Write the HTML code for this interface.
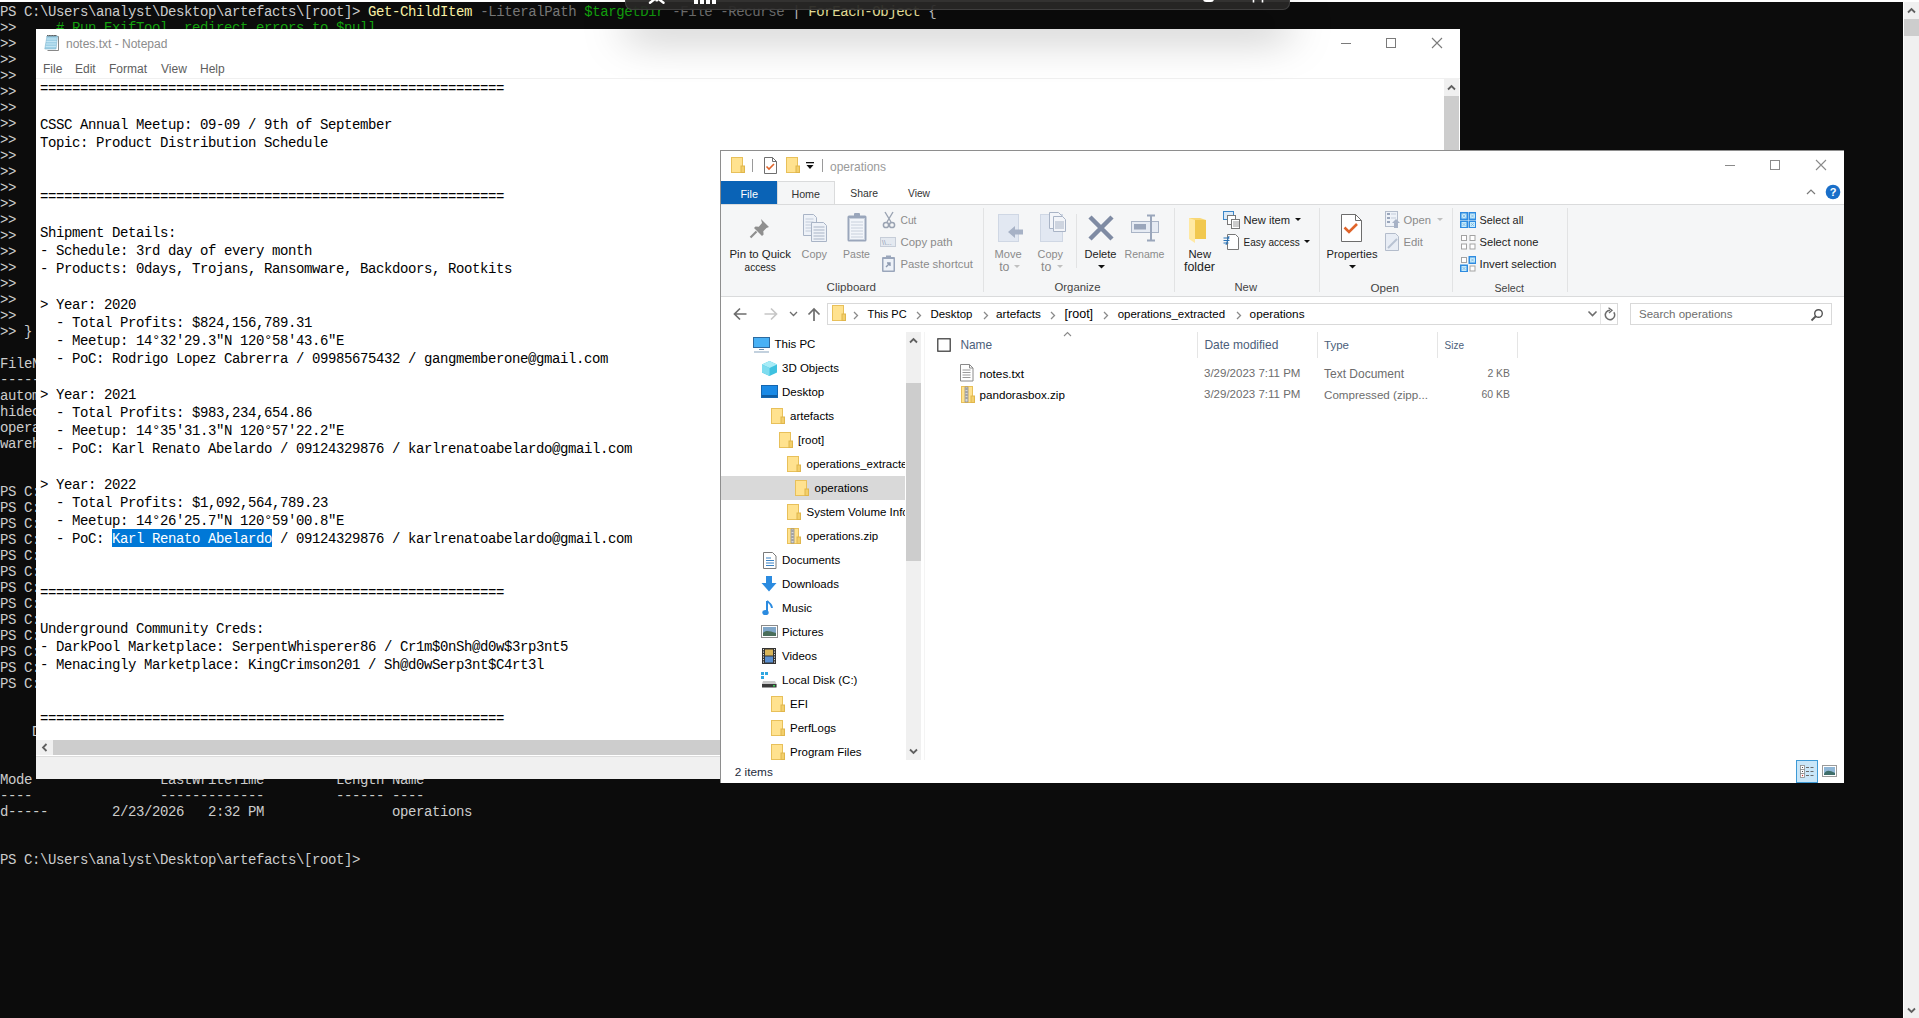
<!DOCTYPE html>
<html><head><meta charset="utf-8"><style>
*{margin:0;padding:0;box-sizing:border-box}
html,body{width:1919px;height:1018px;overflow:hidden;background:#fff;position:relative}
.a{position:absolute;display:block}
.t{position:absolute;white-space:nowrap;line-height:1;font-family:"Liberation Sans",sans-serif}
#term{position:absolute;left:0;top:2px;width:1903px;height:1016px;background:#0c0c0c;overflow:hidden}
#term pre{position:absolute;left:0;top:1.5px;font-family:"Liberation Mono",monospace;font-size:14px;letter-spacing:-0.4px;line-height:16px;color:#cccccc;white-space:pre}
.y{color:#f9f1a5}.g{color:#767676}.gr{color:#13a10e}
#tsb{position:absolute;left:1904px;top:2px;width:15px;height:1016px;background:#f0f0f0}
.sans{font-family:"Liberation Sans",sans-serif}
#np{position:absolute;left:36px;top:29px;width:1424px;height:750px;background:#fff;overflow:hidden}
#np .title{position:absolute;left:30px;top:8px;font-size:12px;color:#8c8c8c}
#np .menu{position:absolute;left:0;top:31px;height:18px;width:100%;font-size:12px;color:#5e5e5e}
#np .menu span{position:absolute;top:2px}
#np .mline{position:absolute;left:0;top:49px;width:1424px;height:1px;background:#f0f0f0}
#np pre{position:absolute;left:4px;top:50.5px;font-family:"Liberation Mono",monospace;font-size:14px;letter-spacing:-0.4px;line-height:18px;color:#000;white-space:pre}
.sel{background:#0078d7;color:#fff;padding:1.7px 0 0 0}
</style></head><body>
<div id="term"><pre>PS C:\Users\analyst\Desktop\artefacts\[root]&gt; <span class="y">Get-ChildItem</span> <span class="g">-LiteralPath</span> <span class="gr">$targetDir</span> <span class="g">-File</span> <span class="g">-Recurse</span> | <span class="y">ForEach-Object</span> {
&gt;&gt;     <span class="gr"># Run ExifTool, redirect errors to $null</span>
&gt;&gt;
&gt;&gt;
&gt;&gt;
&gt;&gt;
&gt;&gt;
&gt;&gt;
&gt;&gt;
&gt;&gt;
&gt;&gt;
&gt;&gt;
&gt;&gt;
&gt;&gt;
&gt;&gt;
&gt;&gt;
&gt;&gt;
&gt;&gt;
&gt;&gt;
&gt;&gt;
&gt;&gt; }

FileName
--------
automation_log.txt
hidecontacts.txt
operations.zip
warehouse.txt


PS C:\Users\analyst\Desktop\artefacts\[root]&gt;
PS C:\Users\analyst\Desktop\artefacts\[root]&gt;
PS C:\Users\analyst\Desktop\artefacts\[root]&gt;
PS C:\Users\analyst\Desktop\artefacts\[root]&gt;
PS C:\Users\analyst\Desktop\artefacts\[root]&gt;
PS C:\Users\analyst\Desktop\artefacts\[root]&gt;
PS C:\Users\analyst\Desktop\artefacts\[root]&gt;
PS C:\Users\analyst\Desktop\artefacts\[root]&gt;
PS C:\Users\analyst\Desktop\artefacts\[root]&gt;
PS C:\Users\analyst\Desktop\artefacts\[root]&gt;
PS C:\Users\analyst\Desktop\artefacts\[root]&gt;
PS C:\Users\analyst\Desktop\artefacts\[root]&gt;
PS C:\Users\analyst\Desktop\artefacts\[root]&gt;


    Directory: C:\Users\analyst\Desktop\artefacts\[root]


Mode                LastWriteTime         Length Name
----                -------------         ------ ----
d-----        2/23/2026   2:32 PM                operations


PS C:\Users\analyst\Desktop\artefacts\[root]&gt;
</pre></div>
<div id="tsb"></div>

<div id="np" class="sans">
<svg class="a" style="left:8px;top:5px" width="17" height="17" viewBox="0 0 17 17"><path d="M4.5 2.5h10v14h-11" fill="none" stroke="#7a7a7a" stroke-width="0.9"/><path d="M3 2h10.5l-1.5 13H0.8z" fill="#9fd0e6" stroke="#7fb6cf" stroke-width="0.6"/><path d="M2.6 5h10.2M2.3 7.5h10.2M2 10h10.2M1.7 12.5h10.2" stroke="#c6e8f5" stroke-width="0.9"/><path d="M3 2.2l0.8-1 0.8 1 0.8-1 0.8 1 0.8-1 0.8 1 0.8-1 0.8 1 0.8-1 0.8 1 0.8-1 0.8 1" fill="none" stroke="#333" stroke-width="0.8"/></svg>
<div class="a" style="left:1408px;top:50px;width:15px;height:661px;background:#f0f0f0"></div>
<div class="a" style="left:1408px;top:67px;width:15px;height:200px;background:#cdcdcd"></div>
<svg class="a" style="left:1411px;top:55px" width="9" height="7" viewBox="0 0 9 7"><path d="M1 5.5L4.5 2 8 5.5" fill="none" stroke="#606060" stroke-width="1.8"/></svg>
<div class="a" style="left:0;top:711px;width:1408px;height:15px;background:#f0f0f0"></div>
<div class="a" style="left:17px;top:711px;width:1100px;height:15px;background:#cdcdcd"></div>
<svg class="a" style="left:5px;top:714px" width="7" height="9" viewBox="0 0 7 9"><path d="M5.5 1L2 4.5 5.5 8" fill="none" stroke="#606060" stroke-width="1.8"/></svg>
<div class="a" style="left:0;top:726px;width:1424px;height:1px;background:#fff"></div>
<div class="a" style="left:0;top:727px;width:1424px;height:1px;background:#dcdcdc"></div>
<div class="a" style="left:0;top:728px;width:1424px;height:22px;background:#f0f0f0"></div>
<div class="a" style="left:1305px;top:14px;width:10px;height:1px;background:#7a7a7a"></div>
<div class="a" style="left:1350px;top:9px;width:10px;height:10px;border:1px solid #7a7a7a"></div>
<svg class="a" style="left:1395px;top:8px" width="12" height="12" viewBox="0 0 12 12"><path d="M1 1L11 11M11 1L1 11" stroke="#7a7a7a" stroke-width="1.1"/></svg>
<div class="title">notes.txt - Notepad</div>
<div class="menu"><span style="left:7px">File</span><span style="left:39px">Edit</span><span style="left:73px">Format</span><span style="left:125px">View</span><span style="left:164px">Help</span></div>
<div class="mline"></div>
<pre>==========================================================

CSSC Annual Meetup: 09-09 / 9th of September
Topic: Product Distribution Schedule


==========================================================

Shipment Details:
- Schedule: 3rd day of every month
- Products: 0days, Trojans, Ransomware, Backdoors, Rootkits

&gt; Year: 2020
  - Total Profits: $824,156,789.31
  - Meetup: 14°32'29.3"N 120°58'43.6"E
  - PoC: Rodrigo Lopez Cabrerra / 09985675432 / gangmemberone@gmail.com

&gt; Year: 2021
  - Total Profits: $983,234,654.86
  - Meetup: 14°35'31.3"N 120°57'22.2"E
  - PoC: Karl Renato Abelardo / 09124329876 / karlrenatoabelardo@gmail.com

&gt; Year: 2022
  - Total Profits: $1,092,564,789.23
  - Meetup: 14°26'25.7"N 120°59'00.8"E
  - PoC: <span class="sel">Karl Renato Abelardo</span> / 09124329876 / karlrenatoabelardo@gmail.com


==========================================================

Underground Community Creds:
- DarkPool Marketplace: SerpentWhisperer86 / Cr1m$0nSh@d0w$3rp3nt5
- Menacingly Marketplace: KingCrimson201 / Sh@d0wSerp3nt$C4rt3l


==========================================================
</pre>
</div>


<div class="a" style="left:720px;top:150px;width:1124px;height:633px;background:#fff;border:1px solid #8e8e8e;border-right:0;border-bottom:0"></div><div class="a" style="left:752px;top:159px;width:1px;height:13px;background:#9a9a9a"></div><div class="a" style="left:822px;top:159px;width:1px;height:13px;background:#9a9a9a"></div><div class="a" style="left:1725px;top:165px;width:10px;height:1px;background:#8a8a8a"></div><div class="a" style="left:1770px;top:160px;width:10px;height:10px;border:1px solid #8a8a8a"></div><div class="a" style="left:721px;top:181px;width:56px;height:23px;background:#0a63b6"></div><div class="a" style="left:777px;top:181px;width:58px;height:24px;background:#f5f6f7;border:1px solid #dadbdc;border-bottom:0"></div><div class="a" style="left:721px;top:204px;width:1123px;height:93px;background:#f5f6f7;border-top:1px solid #dadbdc;border-bottom:1px solid #dadbdc"></div><div class="a" style="left:983px;top:208px;width:1px;height:84px;background:#e2e3e4"></div><div class="a" style="left:1174px;top:208px;width:1px;height:84px;background:#e2e3e4"></div><div class="a" style="left:1319px;top:208px;width:1px;height:84px;background:#e2e3e4"></div><div class="a" style="left:1452px;top:208px;width:1px;height:84px;background:#e2e3e4"></div><div class="a" style="left:1567px;top:208px;width:1px;height:84px;background:#e2e3e4"></div><div class="a" style="left:1076px;top:214px;width:1px;height:54px;background:#e2e3e4"></div><div class="a" style="left:827px;top:303px;width:791px;height:22px;border:1px solid #d9d9d9;background:#fff"></div><div class="a" style="left:1600px;top:304px;width:1px;height:20px;background:#e5e5e5"></div><div class="a" style="left:1630px;top:303px;width:202px;height:22px;border:1px solid #d9d9d9;background:#fff"></div><div class="a" style="left:721px;top:476px;width:184px;height:24px;background:#d9d9d9"></div><div class="a" style="left:906px;top:332px;width:15px;height:428px;background:#f0f0f0"></div><div class="a" style="left:906px;top:383px;width:15px;height:178px;background:#cdcdcd"></div><div class="a" style="left:924px;top:332px;width:1px;height:428px;background:#f4f4f4"></div><div class="a" style="left:1197px;top:332px;width:1px;height:26px;background:#e5e5e5"></div><div class="a" style="left:1317px;top:332px;width:1px;height:26px;background:#e5e5e5"></div><div class="a" style="left:1437px;top:332px;width:1px;height:26px;background:#e5e5e5"></div><div class="a" style="left:1517px;top:332px;width:1px;height:26px;background:#e5e5e5"></div><div class="a" style="left:1796px;top:760px;width:22px;height:23px;background:#c9e6f8;border:1px solid #3e9ad6"></div>
<svg class="a" style="left:731px;top:157px;" width="14" height="16" viewBox="0 0 14 16"><rect x="0.5" y="0.5" width="11" height="15" fill="#ffe28f" stroke="#e8c05a"/><rect x="10" y="9" width="3.5" height="6.5" fill="#f3cf6b" stroke="#e0b64c"/></svg><svg class="a" style="left:764px;top:157px;" width="13" height="17" viewBox="0 0 13 17"><path d="M0.5 0.5h8l4 4v12h-12z" fill="#fff" stroke="#6f6f6f"/><path d="M8.5 0.5v4h4" fill="none" stroke="#6f6f6f"/><path d="M2.5 9.5l2.5 2.5 5-5" fill="none" stroke="#e0642a" stroke-width="1.6"/></svg><svg class="a" style="left:786px;top:157px;" width="14" height="16" viewBox="0 0 14 16"><rect x="0.5" y="0.5" width="11" height="15" fill="#ffe28f" stroke="#e8c05a"/><rect x="10" y="9" width="3.5" height="6.5" fill="#f3cf6b" stroke="#e0b64c"/></svg><svg class="a" style="left:805px;top:162px;" width="10" height="8" viewBox="0 0 10 8"><rect x="1" y="0" width="8" height="1.3" fill="#111"/><path d="M1.5 3h7l-3.5 4z" fill="#111"/></svg><svg class="a" style="left:1815px;top:159px;" width="12" height="12" viewBox="0 0 12 12"><path d="M1 1L11 11M11 1L1 11" stroke="#8a8a8a" stroke-width="1.1"/></svg><svg class="a" style="left:1806px;top:188px;" width="10" height="7" viewBox="0 0 10 7"><path d="M1 6L5 2L9 6" fill="none" stroke="#7a7a7a" stroke-width="1.2"/></svg><svg class="a" style="left:1825px;top:184px;" width="16" height="16" viewBox="0 0 16 16"><circle cx="8" cy="8" r="7.3" fill="#1a6fc9"/><text x="8" y="12.3" text-anchor="middle" font-family="Liberation Sans" font-weight="bold" font-size="11" fill="#fff">?</text></svg><svg class="a" style="left:1014px;top:265px;" width="6" height="4" viewBox="0 0 6 4"><path d="M0 0h6l-3 3z" fill="#c0c0c0"/></svg><svg class="a" style="left:1057px;top:265px;" width="6" height="4" viewBox="0 0 6 4"><path d="M0 0h6l-3 3z" fill="#c0c0c0"/></svg><svg class="a" style="left:1097.5px;top:265px;" width="7" height="4" viewBox="0 0 7 4"><path d="M0 0h7l-3.5 3.5z" fill="#111"/></svg><svg class="a" style="left:1348.5px;top:265px;" width="7" height="4" viewBox="0 0 7 4"><path d="M0 0h7l-3.5 3.5z" fill="#111"/></svg><svg class="a" style="left:1295px;top:218px;" width="6" height="4" viewBox="0 0 6 4"><path d="M0 0h6l-3 3z" fill="#111"/></svg><svg class="a" style="left:1304px;top:240px;" width="6" height="4" viewBox="0 0 6 4"><path d="M0 0h6l-3 3z" fill="#111"/></svg><svg class="a" style="left:1437px;top:218px;" width="6" height="4" viewBox="0 0 6 4"><path d="M0 0h6l-3 3z" fill="#c0c0c0"/></svg><svg class="a" style="left:748px;top:216px;" width="24" height="24" viewBox="0 0 24 24"><path d="M13 3l8 8-2.5 1-3.2 3.2 0.3 3.3-1.6 1.5-8-8 1.5-1.6 3.3 0.3L14 7z" fill="#8f8f8f"/><path d="M8.5 15.5L2.5 21.5" stroke="#8f8f8f" stroke-width="2.2"/></svg><svg class="a" style="left:802px;top:213px;" width="26" height="30" viewBox="0 0 26 30"><path d="M1.5 1.5h10l3 3v18h-13z" fill="#eef2f8" stroke="#a9b4c6"/><path d="M3.5 6h8M3.5 9h8M3.5 12h8M3.5 15h8M3.5 18h8" stroke="#c3ccda"/><path d="M9.5 9.5h12l3 3v16h-15z" fill="#eef2f8" stroke="#a9b4c6"/><path d="M11.5 14h11M11.5 17h11M11.5 20h11M11.5 23h11M11.5 26h11" stroke="#a9b4c6"/></svg><svg class="a" style="left:846px;top:212px;" width="22" height="31" viewBox="0 0 22 31"><rect x="1.5" y="3.5" width="19" height="26" rx="1.5" fill="#9aa6bb"/><rect x="3.5" y="6.5" width="15" height="21" fill="#f2f5fa" stroke="#c8d0dc"/><rect x="8" y="1" width="6" height="4" rx="1" fill="#9aa6bb"/><path d="M5 10h12M5 13h12M5 16h12M5 19h12M5 22h12M5 25h12" stroke="#c8d0dc"/></svg><svg class="a" style="left:882px;top:211px;" width="14" height="18" viewBox="0 0 14 18"><path d="M3 1l6 10M11 1L5 11" stroke="#9aa3b2" stroke-width="1.4"/><circle cx="4" cy="14" r="2.6" fill="none" stroke="#9aa3b2" stroke-width="1.5"/><circle cx="10" cy="14" r="2.6" fill="none" stroke="#9aa3b2" stroke-width="1.5"/></svg><svg class="a" style="left:880px;top:237px;" width="17" height="11" viewBox="0 0 17 11"><rect x="0.5" y="0.5" width="15" height="9" fill="#e4e9f0" stroke="#c6cdd8"/><text x="2" y="8" font-family="Liberation Sans" font-size="7" fill="#8e9ab0">\\...</text></svg><svg class="a" style="left:881px;top:255px;" width="15" height="18" viewBox="0 0 15 18"><rect x="1" y="2" width="13" height="15" rx="1" fill="#9aa6bb"/><rect x="2.5" y="4" width="10" height="11.5" fill="#eef2f8"/><rect x="5" y="0.5" width="5" height="3" fill="#9aa6bb"/><path d="M5 12l4-4M6 8h3v3" stroke="#8d9ab0" stroke-width="1.4" fill="none"/></svg><svg class="a" style="left:997px;top:213px;" width="28" height="30" viewBox="0 0 28 30"><rect x="1.5" y="1.5" width="20" height="27" fill="#e2e8f2" stroke="#cfd7e4"/><path d="M11 19l7-6v3.5h8v5h-8V25z" fill="#a7b2c6"/></svg><svg class="a" style="left:1039px;top:211px;" width="28" height="32" viewBox="0 0 28 32"><rect x="1.5" y="3.5" width="22" height="27" fill="#e2e8f2" stroke="#cfd7e4"/><path d="M10.5 1.5h9l3 3v13h-12z" fill="#f3f5f9" stroke="#a9b4c6"/><path d="M14.5 5.5h9l3 3v12h-12z" fill="#f3f5f9" stroke="#a9b4c6"/><path d="M16 11h9M16 13h9M16 15h9M16 17h9" stroke="#a9b4c6"/></svg><svg class="a" style="left:1087px;top:214px;" width="28" height="28" viewBox="0 0 28 28"><path d="M3 3L25 25M25 3L3 25" stroke="#7f8ba3" stroke-width="4.5"/></svg><svg class="a" style="left:1130px;top:214px;" width="30" height="28" viewBox="0 0 30 28"><rect x="1.5" y="7.5" width="27" height="11" fill="#e6ebf3" stroke="#a9b4c6"/><rect x="4" y="10" width="12" height="5.5" fill="#9aa6bb"/><path d="M17 1.5h8M21 1.5v25M17 26.5h8" stroke="#9aa6bb" stroke-width="2"/></svg><svg class="a" style="left:1188px;top:215px;" width="20" height="28" viewBox="0 0 20 28"><path d="M1 3h11l6 2v19H1z" fill="#f8d775"/><path d="M1 3l6 2v23L1 24z" fill="#ffe9a3"/><path d="M7 5h11v19H7z" fill="#f1c84f"/></svg><svg class="a" style="left:1223px;top:211px;" width="18" height="18" viewBox="0 0 18 18"><rect x="0.5" y="0.5" width="10" height="8" fill="#dbeaf8" stroke="#3c86c8"/><rect x="4.5" y="4.5" width="8" height="9" fill="#fff" stroke="#777"/><rect x="8.5" y="8.5" width="8" height="9" fill="#fff" stroke="#777"/><path d="M10 11h6M10 13h6M10 15h6" stroke="#999"/></svg><svg class="a" style="left:1223px;top:233px;" width="17" height="18" viewBox="0 0 17 18"><path d="M4.5 1.5h8l3 3v12h-11z" fill="#fff" stroke="#777"/><path d="M0.5 5h6M0.5 7.5h6M0.5 10h5" stroke="#2a74b8" stroke-width="1.1"/><path d="M6 3l-3 9" stroke="#2a74b8"/></svg><svg class="a" style="left:1340px;top:213px;" width="23" height="30" viewBox="0 0 23 30"><path d="M1.5 1.5h14l6 6v21h-20z" fill="#fff" stroke="#6d6d6d"/><path d="M15.5 1.5v6h6" fill="none" stroke="#6d6d6d"/><path d="M4.5 14.5l4.5 4.5 8-8" fill="none" stroke="#e0642a" stroke-width="2.6"/></svg><svg class="a" style="left:1385px;top:211px;" width="16" height="18" viewBox="0 0 16 18"><rect x="0.5" y="0.5" width="12" height="15" fill="#eef2f8" stroke="#b3bccb"/><path d="M2 3h3M2 7h3M2 11h3" stroke="#9aa6bb" stroke-width="2"/><path d="M6 3h5M6 7h5" stroke="#c3ccda"/><path d="M9 17v-5h-2l4-4 4 4h-2v5z" fill="#a7b2c6"/></svg><svg class="a" style="left:1385px;top:233px;" width="16" height="18" viewBox="0 0 16 18"><path d="M0.5 0.5h10l3 3v14h-13z" fill="#e8edf5" stroke="#b3bccb"/><path d="M3 15l9-9" stroke="#b8c2d2" stroke-width="2"/></svg><svg class="a" style="left:1460px;top:212px;" width="16" height="16" viewBox="0 0 16 16"><rect x="0.75" y="0.75" width="6.5" height="6.5" fill="#c6ebfb" stroke="#2e8be0" stroke-width="1.5"/><path d="M2.5 2.5l3 3M5.5 2.5l-3 3" stroke="#6ba6d8" stroke-width="0.6"/><rect x="9.25" y="0.75" width="6.5" height="6.5" fill="#c6ebfb" stroke="#2e8be0" stroke-width="1.5"/><path d="M11.0 2.5l3 3M14.0 2.5l-3 3" stroke="#6ba6d8" stroke-width="0.6"/><rect x="0.75" y="9.25" width="6.5" height="6.5" fill="#c6ebfb" stroke="#2e8be0" stroke-width="1.5"/><path d="M2.5 11.0l3 3M5.5 11.0l-3 3" stroke="#6ba6d8" stroke-width="0.6"/><rect x="9.25" y="9.25" width="6.5" height="6.5" fill="#c6ebfb" stroke="#2e8be0" stroke-width="1.5"/><path d="M11.0 11.0l3 3M14.0 11.0l-3 3" stroke="#6ba6d8" stroke-width="0.6"/></svg><svg class="a" style="left:1460px;top:234px;" width="16" height="16" viewBox="0 0 16 16"><rect x="1.5" y="1.5" width="5" height="5" fill="#fff" stroke="#a3a3a3"/><rect x="10.0" y="1.5" width="5" height="5" fill="#fff" stroke="#a3a3a3"/><rect x="1.5" y="10.0" width="5" height="5" fill="#fff" stroke="#a3a3a3"/><rect x="10.0" y="10.0" width="5" height="5" fill="#fff" stroke="#a3a3a3"/></svg><svg class="a" style="left:1460px;top:256px;" width="16" height="16" viewBox="0 0 16 16"><rect x="1.5" y="1.5" width="5" height="5" fill="#fff" stroke="#a3a3a3"/><rect x="9.25" y="0.75" width="6.5" height="6.5" fill="#c6ebfb" stroke="#2e8be0" stroke-width="1.5"/><path d="M11.0 2.5l3 3M14.0 2.5l-3 3" stroke="#6ba6d8" stroke-width="0.6"/><rect x="0.75" y="9.25" width="6.5" height="6.5" fill="#c6ebfb" stroke="#2e8be0" stroke-width="1.5"/><path d="M2.5 11.0l3 3M5.5 11.0l-3 3" stroke="#6ba6d8" stroke-width="0.6"/><rect x="10.0" y="10.0" width="5" height="5" fill="#fff" stroke="#a3a3a3"/></svg><svg class="a" style="left:733px;top:307px;" width="15" height="14" viewBox="0 0 15 14"><path d="M13.5 7H2M7 1.5L1.5 7 7 12.5" fill="none" stroke="#6d6d6d" stroke-width="1.7"/></svg><svg class="a" style="left:763px;top:307px;" width="15" height="14" viewBox="0 0 15 14"><path d="M1.5 7H13M8 1.5L13.5 7 8 12.5" fill="none" stroke="#c6c6c6" stroke-width="1.7"/></svg><svg class="a" style="left:789px;top:311px;" width="9" height="6" viewBox="0 0 9 6"><path d="M1 1l3.5 3.5L8 1" fill="none" stroke="#6d6d6d" stroke-width="1.3"/></svg><svg class="a" style="left:807px;top:307px;" width="14" height="15" viewBox="0 0 14 15"><path d="M7 14V2M1.5 7.5L7 2l5.5 5.5" fill="none" stroke="#6d6d6d" stroke-width="1.7"/></svg><svg class="a" style="left:832px;top:305px;" width="14" height="16" viewBox="0 0 14 16"><rect x="0.5" y="0.5" width="11" height="15" fill="#ffe28f" stroke="#e8c05a"/><rect x="10" y="9" width="3.5" height="6.5" fill="#f3cf6b" stroke="#e0b64c"/></svg><svg class="a" style="left:853px;top:311px;" width="6" height="9" viewBox="0 0 6 9"><path d="M1 1l3.5 3.5L1 8" fill="none" stroke="#8a8a8a" stroke-width="1.3"/></svg><svg class="a" style="left:916px;top:311px;" width="6" height="9" viewBox="0 0 6 9"><path d="M1 1l3.5 3.5L1 8" fill="none" stroke="#8a8a8a" stroke-width="1.3"/></svg><svg class="a" style="left:983px;top:311px;" width="6" height="9" viewBox="0 0 6 9"><path d="M1 1l3.5 3.5L1 8" fill="none" stroke="#8a8a8a" stroke-width="1.3"/></svg><svg class="a" style="left:1050px;top:311px;" width="6" height="9" viewBox="0 0 6 9"><path d="M1 1l3.5 3.5L1 8" fill="none" stroke="#8a8a8a" stroke-width="1.3"/></svg><svg class="a" style="left:1103px;top:311px;" width="6" height="9" viewBox="0 0 6 9"><path d="M1 1l3.5 3.5L1 8" fill="none" stroke="#8a8a8a" stroke-width="1.3"/></svg><svg class="a" style="left:1236px;top:311px;" width="6" height="9" viewBox="0 0 6 9"><path d="M1 1l3.5 3.5L1 8" fill="none" stroke="#8a8a8a" stroke-width="1.3"/></svg><svg class="a" style="left:1587px;top:310px;" width="11" height="8" viewBox="0 0 11 8"><path d="M1.5 1.5l4 4 4-4" fill="none" stroke="#6d6d6d" stroke-width="1.6"/></svg><svg class="a" style="left:1603px;top:307px;" width="14" height="15" viewBox="0 0 14 15"><path d="M10.8 5.2A4.7 4.7 0 1 1 7 3.3" fill="none" stroke="#6d6d6d" stroke-width="1.5"/><path d="M5.5 0.8L9 3.3 6 6" fill="none" stroke="#6d6d6d" stroke-width="1.3"/></svg><svg class="a" style="left:1810px;top:308px;" width="14" height="14" viewBox="0 0 14 14"><circle cx="8.5" cy="5.5" r="3.8" fill="none" stroke="#555" stroke-width="1.4"/><path d="M6 8L1.5 12.5" stroke="#555" stroke-width="1.8"/></svg><svg class="a" style="left:753px;top:337px;" width="17" height="16" viewBox="0 0 17 16"><rect x="0.5" y="0.5" width="16" height="10" fill="#48b1f5" stroke="#2c6aa0"/><path d="M6 12.5h5" stroke="#6b8fb0"/><path d="M1 15h15" stroke="#9bb3c8" stroke-width="1.2"/></svg><svg class="a" style="left:761px;top:360px;" width="17" height="17" viewBox="0 0 17 17"><path d="M8.5 1L16 4.5v8L8.5 16 1 12.5v-8z" fill="#3fc2e0"/><path d="M1 4.5L8.5 8 16 4.5 8.5 1z" fill="#a8ecf7"/><path d="M8.5 8v8L1 12.5v-8z" fill="#7edcef"/></svg><svg class="a" style="left:761px;top:385px;" width="17" height="14" viewBox="0 0 17 14"><rect x="0.5" y="0.5" width="16" height="12" fill="#1a8ae6" stroke="#1466b0"/><path d="M1 11h15" stroke="#0c4f8f" stroke-width="1.5"/></svg><svg class="a" style="left:771px;top:408px;" width="14" height="16" viewBox="0 0 14 16"><rect x="0.5" y="0.5" width="11" height="15" fill="#ffe28f" stroke="#e8c05a"/><rect x="10" y="9" width="3.5" height="6.5" fill="#f3cf6b" stroke="#e0b64c"/></svg><svg class="a" style="left:779px;top:432px;" width="14" height="16" viewBox="0 0 14 16"><rect x="0.5" y="0.5" width="11" height="15" fill="#ffe28f" stroke="#e8c05a"/><rect x="10" y="9" width="3.5" height="6.5" fill="#f3cf6b" stroke="#e0b64c"/></svg><svg class="a" style="left:787px;top:456px;" width="14" height="16" viewBox="0 0 14 16"><rect x="0.5" y="0.5" width="11" height="15" fill="#ffe28f" stroke="#e8c05a"/><rect x="10" y="9" width="3.5" height="6.5" fill="#f3cf6b" stroke="#e0b64c"/></svg><svg class="a" style="left:795px;top:480px;" width="14" height="16" viewBox="0 0 14 16"><rect x="0.5" y="0.5" width="11" height="15" fill="#ffe28f" stroke="#e8c05a"/><rect x="10" y="9" width="3.5" height="6.5" fill="#f3cf6b" stroke="#e0b64c"/></svg><svg class="a" style="left:787px;top:504px;" width="14" height="16" viewBox="0 0 14 16"><rect x="0.5" y="0.5" width="11" height="15" fill="#ffe28f" stroke="#e8c05a"/><rect x="10" y="9" width="3.5" height="6.5" fill="#f3cf6b" stroke="#e0b64c"/></svg><svg class="a" style="left:787px;top:528px;" width="14" height="16" viewBox="0 0 14 16"><rect x="0.5" y="0.5" width="11" height="15" fill="#ffe28f" stroke="#e8c05a"/><rect x="10" y="9" width="3.5" height="6.5" fill="#f3cf6b" stroke="#e0b64c"/><rect x="4" y="1" width="3" height="14" fill="#d8d8d8" stroke="#777" stroke-width="0.6"/><path d="M4.5 3h2M4.5 6h2M4.5 9h2M4.5 12h2" stroke="#555" stroke-width="0.8"/></svg><svg class="a" style="left:763px;top:552px;" width="14" height="17" viewBox="0 0 14 17"><path d="M0.5 0.5h9l3.5 3.5v12.5H0.5z" fill="#fff" stroke="#7a7a7a"/><path d="M3 6h5M3 8.5h8M3 11h8M3 13.5h8" stroke="#3b82c4"/></svg><svg class="a" style="left:761px;top:576px;" width="16" height="17" viewBox="0 0 16 17"><path d="M5 0h6v7h4.5L8 15.5 0.5 7H5z" fill="#2b8be0"/></svg><svg class="a" style="left:762px;top:600px;" width="12" height="16" viewBox="0 0 12 16"><path d="M5 1v11" stroke="#2b8be0" stroke-width="2"/><ellipse cx="3.5" cy="12.5" rx="3.2" ry="2.6" fill="#2b8be0"/><path d="M5 1c2 2 5 3 5 7" fill="none" stroke="#2b8be0" stroke-width="1.8"/></svg><svg class="a" style="left:761px;top:625px;" width="17" height="13" viewBox="0 0 17 13"><rect x="0.5" y="0.5" width="16" height="12" fill="#fff" stroke="#8a8a8a"/><rect x="2" y="2" width="13" height="9" fill="#7fa6c8"/><path d="M2 8c3-3 6-2 13 0v3H2z" fill="#4a6e5a"/></svg><svg class="a" style="left:762px;top:648px;" width="14" height="16" viewBox="0 0 14 16"><rect x="0" y="0" width="14" height="16" fill="#333"/><rect x="3" y="1.5" width="8" height="6" fill="#d9b65a"/><rect x="3" y="8.5" width="8" height="6" fill="#5b8fd0"/><path d="M1.5 1v14M12.5 1v14" stroke="#ddd" stroke-dasharray="1.2 1.3"/></svg><svg class="a" style="left:761px;top:672px;" width="16" height="16" viewBox="0 0 16 16"><rect x="0" y="0" width="3" height="3" fill="#2fa6e0"/><rect x="4" y="0" width="3" height="3" fill="#2fa6e0"/><rect x="0" y="4" width="3" height="3" fill="#2fa6e0"/><path d="M2 9h12l1.5 3v3H1v-3z" fill="#c9c9c9"/><rect x="1" y="12" width="14.5" height="3.5" fill="#3a3a3a"/><rect x="12" y="13" width="2" height="1.5" fill="#39d353"/></svg><svg class="a" style="left:771px;top:696px;" width="14" height="16" viewBox="0 0 14 16"><rect x="0.5" y="0.5" width="11" height="15" fill="#ffe28f" stroke="#e8c05a"/><rect x="10" y="9" width="3.5" height="6.5" fill="#f3cf6b" stroke="#e0b64c"/></svg><svg class="a" style="left:771px;top:720px;" width="14" height="16" viewBox="0 0 14 16"><rect x="0.5" y="0.5" width="11" height="15" fill="#ffe28f" stroke="#e8c05a"/><rect x="10" y="9" width="3.5" height="6.5" fill="#f3cf6b" stroke="#e0b64c"/></svg><svg class="a" style="left:771px;top:744px;" width="14" height="16" viewBox="0 0 14 16"><rect x="0.5" y="0.5" width="11" height="15" fill="#ffe28f" stroke="#e8c05a"/><rect x="10" y="9" width="3.5" height="6.5" fill="#f3cf6b" stroke="#e0b64c"/></svg><svg class="a" style="left:909px;top:337px;" width="9" height="7" viewBox="0 0 9 7"><path d="M1 5.5L4.5 2 8 5.5" fill="none" stroke="#606060" stroke-width="1.8"/></svg><svg class="a" style="left:909px;top:748px;" width="9" height="7" viewBox="0 0 9 7"><path d="M1 1.5L4.5 5 8 1.5" fill="none" stroke="#606060" stroke-width="1.8"/></svg><svg class="a" style="left:937px;top:337.5px;" width="15" height="15" viewBox="0 0 15 15"><rect x="0.8" y="0.8" width="12.4" height="12.4" fill="#fff" stroke="#333" stroke-width="1.2"/></svg><svg class="a" style="left:1063px;top:331px;" width="9" height="6" viewBox="0 0 9 6"><path d="M1 5L4.5 1.5 8 5" fill="none" stroke="#8a8a8a" stroke-width="1.1"/></svg><svg class="a" style="left:960px;top:364px;" width="14" height="18" viewBox="0 0 14 18"><path d="M0.5 0.5h9l3.5 3.5v13H0.5z" fill="#fff" stroke="#8a8a8a"/><path d="M9.5 0.5v3.5h3.5" fill="none" stroke="#8a8a8a"/><path d="M2.5 6h8M2.5 8.5h8M2.5 11h8M2.5 13.5h8" stroke="#9a9a9a"/></svg><svg class="a" style="left:961px;top:386px;" width="14" height="17" viewBox="0 0 14 17"><rect x="0.5" y="0.5" width="11" height="16" fill="#ffe28f" stroke="#e8c05a"/><rect x="10" y="10" width="3.5" height="6.5" fill="#f3cf6b" stroke="#e0b64c"/><rect x="4" y="1" width="3" height="15" fill="#d8d8d8" stroke="#777" stroke-width="0.6"/><path d="M4.5 3h2M4.5 6h2M4.5 9h2M4.5 12h2" stroke="#555" stroke-width="0.8"/></svg><svg class="a" style="left:1800px;top:765px;" width="15" height="14" viewBox="0 0 15 14"><rect x="0.5" y="0.5" width="4" height="4" fill="#fff" stroke="#8a8a8a" stroke-width="0.8"/><rect x="0.5" y="4.5" width="4" height="4" fill="#fff" stroke="#8a8a8a" stroke-width="0.8"/><rect x="0.5" y="8.5" width="4" height="4" fill="#fff" stroke="#8a8a8a" stroke-width="0.8"/><circle cx="2.5" cy="2.5" r="0.6" fill="#333"/><circle cx="2.5" cy="6.5" r="0.6" fill="#333"/><circle cx="2.5" cy="10.5" r="0.7" fill="#c33"/><path d="M6 2.5h3M10.5 2.5h3M6 6.5h3M10.5 6.5h3M6 10.5h3M10.5 10.5h3" stroke="#6a6a6a" stroke-width="1"/></svg><svg class="a" style="left:1822px;top:765px;" width="15" height="12" viewBox="0 0 15 12"><rect x="0.5" y="0.5" width="14" height="11" fill="#fff" stroke="#9a9a9a"/><rect x="2" y="2" width="11" height="8" fill="#8fb6d6"/><path d="M2 9c2-4 5-4 11-1v2H2z" fill="#3f6e6a"/></svg>
<div class="a" style="left:721px;top:330px;width:184px;height:430px;overflow:hidden"><span class="t" style="left:53.5px;top:9.07px;font-size:11.5px;color:#000">This PC</span><span class="t" style="left:61.0px;top:33.07px;font-size:11.5px;color:#000">3D Objects</span><span class="t" style="left:61.0px;top:57.07px;font-size:11.5px;color:#000">Desktop</span><span class="t" style="left:69.0px;top:81.07px;font-size:11.5px;color:#000">artefacts</span><span class="t" style="left:77.0px;top:105.07px;font-size:11.5px;color:#000">[root]</span><span class="t" style="left:85.5px;top:129.07px;font-size:11.5px;color:#000">operations_extracted</span><span class="t" style="left:93.5px;top:153.07px;font-size:11.5px;color:#000">operations</span><span class="t" style="left:85.5px;top:177.07px;font-size:11.5px;color:#000">System Volume Information</span><span class="t" style="left:85.5px;top:201.07px;font-size:11.5px;color:#000">operations.zip</span><span class="t" style="left:61.0px;top:225.07px;font-size:11.5px;color:#000">Documents</span><span class="t" style="left:61.0px;top:249.07px;font-size:11.5px;color:#000">Downloads</span><span class="t" style="left:61.0px;top:273.07px;font-size:11.5px;color:#000">Music</span><span class="t" style="left:61.0px;top:297.07px;font-size:11.5px;color:#000">Pictures</span><span class="t" style="left:61.0px;top:321.07px;font-size:11.5px;color:#000">Videos</span><span class="t" style="left:61.0px;top:345.07px;font-size:11.5px;color:#000">Local Disk (C:)</span><span class="t" style="left:69.0px;top:369.07px;font-size:11.5px;color:#000">EFI</span><span class="t" style="left:69.0px;top:393.07px;font-size:11.5px;color:#000">PerfLogs</span><span class="t" style="left:69.0px;top:417.07px;font-size:11.5px;color:#000">Program Files</span></div>
<span class="t" style="left:830.0px;top:160.65px;font-size:11.99px;color:#9a9a9a;">operations</span>
<span class="t" style="left:740.4px;top:188.55px;font-size:10.92px;color:#fff;">File</span>
<span class="t" style="left:791.4px;top:188.72px;font-size:10.72px;color:#333;">Home</span>
<span class="t" style="left:850.3px;top:189.01px;font-size:10.38px;color:#333;">Share</span>
<span class="t" style="left:908.0px;top:189.14px;font-size:10.24px;color:#333;">View</span>
<span class="t" style="left:729.5px;top:248.64px;font-size:11.41px;color:#222;">Pin to Quick</span>
<span class="t" style="left:744.6px;top:262.54px;font-size:10.00px;color:#222;">access</span>
<span class="t" style="left:801.5px;top:249.05px;font-size:10.92px;color:#8b8b8b;">Copy</span>
<span class="t" style="left:843.0px;top:249.36px;font-size:10.56px;color:#8b8b8b;">Paste</span>
<span class="t" style="left:994.5px;top:248.88px;font-size:11.12px;color:#8b8b8b;">Move</span>
<span class="t" style="left:999.2px;top:260.55px;font-size:12.35px;color:#8b8b8b;">to</span>
<span class="t" style="left:1037.5px;top:249.05px;font-size:10.92px;color:#8b8b8b;">Copy</span>
<span class="t" style="left:1041.0px;top:260.55px;font-size:12.35px;color:#8b8b8b;">to</span>
<span class="t" style="left:1084.5px;top:248.93px;font-size:11.07px;color:#222;">Delete</span>
<span class="t" style="left:1124.5px;top:249.34px;font-size:10.58px;color:#8b8b8b;">Rename</span>
<span class="t" style="left:1188.5px;top:248.78px;font-size:11.25px;color:#222;">New</span>
<span class="t" style="left:1184.0px;top:260.51px;font-size:12.39px;color:#222;">folder</span>
<span class="t" style="left:1326.5px;top:248.83px;font-size:11.19px;color:#222;">Properties</span>
<span class="t" style="left:900.5px;top:215.70px;font-size:10.28px;color:#8b8b8b;">Cut</span>
<span class="t" style="left:900.5px;top:236.84px;font-size:11.41px;color:#8b8b8b;">Copy path</span>
<span class="t" style="left:900.5px;top:259.00px;font-size:11.34px;color:#8b8b8b;">Paste shortcut</span>
<span class="t" style="left:1243.5px;top:214.95px;font-size:11.16px;color:#222;">New item</span>
<span class="t" style="left:1243.5px;top:238.03px;font-size:10.00px;color:#222;">Easy access</span>
<span class="t" style="left:1403.5px;top:214.88px;font-size:11.24px;color:#8b8b8b;">Open</span>
<span class="t" style="left:1403.5px;top:236.92px;font-size:11.32px;color:#8b8b8b;">Edit</span>
<span class="t" style="left:1479.5px;top:215.22px;font-size:10.84px;color:#222;">Select all</span>
<span class="t" style="left:1479.5px;top:237.04px;font-size:11.17px;color:#222;">Select none</span>
<span class="t" style="left:1479.5px;top:258.91px;font-size:11.45px;color:#222;">Invert selection</span>
<span class="t" style="left:826.6px;top:281.81px;font-size:11.56px;color:#444;">Clipboard</span>
<span class="t" style="left:1054.5px;top:282.00px;font-size:11.34px;color:#444;">Organize</span>
<span class="t" style="left:1234.5px;top:282.08px;font-size:11.25px;color:#444;">New</span>
<span class="t" style="left:1370.5px;top:281.74px;font-size:11.65px;color:#444;">Open</span>
<span class="t" style="left:1494.5px;top:282.62px;font-size:10.61px;color:#444;">Select</span>
<span class="t" style="left:867.5px;top:309.07px;font-size:11.02px;color:#000;">This PC</span>
<span class="t" style="left:930.5px;top:308.71px;font-size:11.45px;color:#000;">Desktop</span>
<span class="t" style="left:996.0px;top:308.47px;font-size:11.73px;color:#000;">artefacts</span>
<span class="t" style="left:1064.6px;top:307.82px;font-size:12.50px;color:#000;">[root]</span>
<span class="t" style="left:1117.7px;top:308.66px;font-size:11.51px;color:#000;">operations_extracted</span>
<span class="t" style="left:1249.6px;top:308.43px;font-size:11.78px;color:#000;">operations</span>
<span class="t" style="left:1639.0px;top:309.15px;font-size:11.52px;color:#6d6d6d;">Search operations</span>
<span class="t" style="left:960.4px;top:339.71px;font-size:11.92px;color:#4c607a;">Name</span>
<span class="t" style="left:1204.4px;top:338.95px;font-size:11.99px;color:#4c607a;">Date modified</span>
<span class="t" style="left:1324.0px;top:339.54px;font-size:11.53px;color:#4c607a;">Type</span>
<span class="t" style="left:1444.5px;top:340.81px;font-size:10.02px;color:#4c607a;">Size</span>
<span class="t" style="left:979.5px;top:367.63px;font-size:11.77px;color:#000;">notes.txt</span>
<span class="t" style="left:1204.0px;top:368.34px;font-size:11.53px;color:#6d6d6d;">3/29/2023 7:11 PM</span>
<span class="t" style="left:1324.0px;top:367.95px;font-size:12.00px;color:#6d6d6d;">Text Document</span>
<span class="t" style="left:1487.4px;top:369.28px;font-size:10.42px;color:#6d6d6d;">2 KB</span>
<span class="t" style="left:979.5px;top:388.94px;font-size:11.65px;color:#000;">pandorasbox.zip</span>
<span class="t" style="left:1204.0px;top:389.04px;font-size:11.53px;color:#6d6d6d;">3/29/2023 7:11 PM</span>
<span class="t" style="left:1324.0px;top:388.96px;font-size:11.62px;color:#6d6d6d;">Compressed (zipp...</span>
<span class="t" style="left:1481.5px;top:389.94px;font-size:10.46px;color:#6d6d6d;">60 KB</span>
<span class="t" style="left:734.8px;top:765.82px;font-size:11.79px;color:#1e2b3c;">2 items</span>
<div class="a" style="left:1904px;top:19px;width:15px;height:17px;background:#cdcdcd"></div><svg class="a" style="left:1907px;top:7px" width="9" height="7" viewBox="0 0 9 7"><path d="M1 5.5L4.5 2 8 5.5" fill="none" stroke="#606060" stroke-width="1.8"/></svg><svg class="a" style="left:1907px;top:1007px" width="9" height="7" viewBox="0 0 9 7"><path d="M1 1.5L4.5 5 8 1.5" fill="none" stroke="#606060" stroke-width="1.8"/></svg>
<div class="a" style="left:625px;top:-8px;width:665px;height:17.5px;background:rgba(40,39,38,0.95);border:1px solid rgba(80,80,80,0.6);border-radius:7px;box-shadow:0 24px 44px 0 rgba(0,0,0,0.36)"></div><svg class="a" style="left:645px;top:0px" width="24" height="6" viewBox="0 0 24 6"><path d="M5 2.8L10.5 -1.5M13 -1.5L18.5 2.8" stroke="#fff" stroke-width="2.4" stroke-linecap="round" fill="none"/><circle cx="11.8" cy="0" r="1.6" fill="#fff"/></svg><svg class="a" style="left:692px;top:0px" width="26" height="6" viewBox="0 0 26 6"><rect x="2" y="0" width="4" height="4" fill="#fff"/><rect x="8" y="0" width="4" height="4" fill="#fff"/><rect x="14" y="0" width="4" height="4" fill="#fff"/><rect x="20" y="0" width="4" height="4" fill="#fff"/></svg><div class="a" style="left:1203px;top:-4px;width:11px;height:6px;background:#fff;border-radius:3px"></div><svg class="a" style="left:1251px;top:0px" width="14" height="5" viewBox="0 0 14 5"><path d="M2.5 0v2.5M11.5 0v2.5" stroke="#fff" stroke-width="1.6"/></svg>
</body></html>
